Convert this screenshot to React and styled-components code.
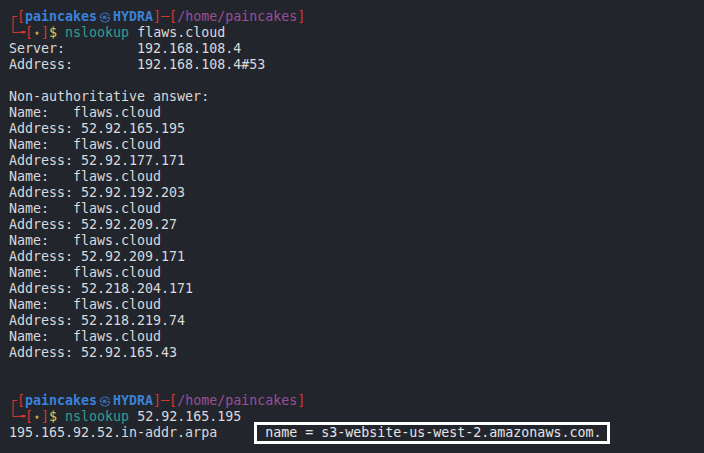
import React from 'react';
import styled, { createGlobalStyle } from 'styled-components';

const GlobalStyle = createGlobalStyle`
  html, body {
    margin: 0;
    padding: 0;
    background: #23252d;
  }
`

const STTerminal = styled.div`
  width: 704px;
  height: 453px;
  box-sizing: border-box;
  padding: 9px 0 0 9px;
  background: #23252d;
  color: #d9d9dc;
  font-family: "DejaVu Sans Mono", "Liberation Mono", monospace;
  font-size: 13.3px;
  line-height: 16px;
  overflow: hidden;
`
const STLine = styled.div`
  height: 16px;
  white-space: pre;
`
const STRed = styled.span`
  color: #d2382f;
`
const STHost = styled.span`
  color: #3a82d9;
  font-weight: bold;
`
const STGlyph = styled.span`
  display: inline-block;
  width: ${p => p.cols * 8}px;
  text-align: center;
  font-size: ${p => p.size};
  line-height: 16px;
  color: ${p => p.color};
  vertical-align: top;
`
const STPath = styled.span`
  color: #9b4f94;
`
const STDollar = styled.span`
  color: #e3c34f;
`
const STCmd = styled.span`
  color: #2f9e8e;
`
const STHighlight = styled.span`
  display: inline-block;
  padding: 0 6px 0 8px;
  margin-left: -8px;
  outline: 3px solid #ffffff;
  color: #e4e4e6;
`

const records = [
  '52.92.165.195',
  '52.92.177.171',
  '52.92.192.203',
  '52.92.209.27',
  '52.92.209.171',
  '52.218.204.171',
  '52.218.219.74',
  '52.92.165.43',
];

const Prompt = ({ command, arg }) => (
  <>
    <STLine>
      <STRed>┌[</STRed>
      <STHost>paincakes</STHost>
      <STGlyph cols={2} color="#3a82d9" size="12px">㉿</STGlyph>
      <STHost>HYDRA</STHost>
      <STRed>]─[</STRed>
      <STPath>/home/paincakes</STPath>
      <STRed>]</STRed>
    </STLine>
    <STLine>
      <STRed>└╼[</STRed>
      <STGlyph cols={1} color="#e3c34f" size="8px">★</STGlyph>
      <STRed>]</STRed>
      <STDollar>$</STDollar> <STCmd>{command}</STCmd> {arg}
    </STLine>
  </>
);

export default function App() {
  return <>
    <GlobalStyle />
    <STTerminal>
      <Prompt command="nslookup" arg="flaws.cloud" />
      <STLine>{'Server:         192.168.108.4'}</STLine>
      <STLine>{'Address:        192.168.108.4#53'}</STLine>
      <STLine> </STLine>
      <STLine>Non-authoritative answer:</STLine>
      {records.map((ip, index) => <React.Fragment key={'rec' + index}>
        <STLine>{'Name:   flaws.cloud'}</STLine>
        <STLine>{'Address: ' + ip}</STLine>
      </React.Fragment>)}
      <STLine> </STLine>
      <STLine> </STLine>
      <Prompt command="nslookup" arg="52.92.165.195" />
      <STLine>
        {'195.165.92.52.in-addr.arpa      '}
        <STHighlight>name = s3-website-us-west-2.amazonaws.com.</STHighlight>
      </STLine>
    </STTerminal>
  </>;
}
